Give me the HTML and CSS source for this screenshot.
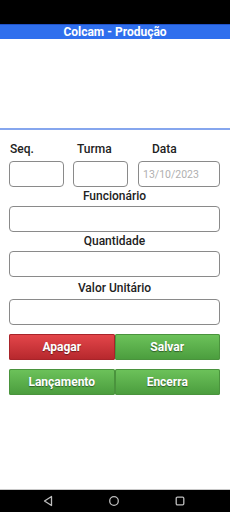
FILE: index.html
```html
<!DOCTYPE html>
<html>
<head>
    <title>Colcam - Produção</title>
    <link rel="stylesheet" href="styles.css">
</head>
<body>
    <div class="screen">
        <div class="status-bar"></div>
        <div class="title-bar">Colcam - Produção</div>
        <div class="banner"></div>

        <form class="prod-form">
            <div class="top-row">
                <label class="lbl lbl-seq">Seq.</label>
                <label class="lbl lbl-turma">Turma</label>
                <label class="lbl lbl-data">Data</label>
                <input type="text" class="field">
                <input type="text" class="field">
                <input type="text" class="field" placeholder="13/10/2023">
            </div>

            <label class="lbl lbl-center">Funcionário</label>
            <input type="text" class="field">
            <label class="lbl lbl-center">Quantidade</label>
            <input type="text" class="field">
            <label class="lbl lbl-center lbl-valor">Valor Unitário</label>
            <input type="text" class="field">

            <div class="btn-row first">
                <button type="button" class="btn btn-red">Apagar</button>
                <button type="button" class="btn btn-green">Salvar</button>
            </div>
            <div class="btn-row">
                <button type="button" class="btn btn-green">Lançamento</button>
                <button type="button" class="btn btn-green">Encerra</button>
            </div>
        </form>

        <div class="nav-bar">
            <svg width="12" height="12" viewBox="0 0 12 12"><path d="M9.5 1.5 L2.5 6 L9.5 10.5 Z" fill="none" stroke="#bdbdbd" stroke-width="1.3" stroke-linejoin="round"/></svg>
            <svg width="12" height="12" viewBox="0 0 12 12"><circle cx="6" cy="6" r="4.3" fill="none" stroke="#bdbdbd" stroke-width="1.3"/></svg>
            <svg width="12" height="12" viewBox="0 0 12 12"><rect x="2.2" y="2.2" width="7.6" height="7.6" rx="1.2" fill="none" stroke="#bdbdbd" stroke-width="1.3"/></svg>
        </div>
    </div>
</body>
</html>
```

FILE: styles.css
```css
body {
    margin: 0;
    font-family: Roboto, "Liberation Sans", sans-serif;
    background-color: #fff;
    color: #222;
}
.screen {
    width: 230px;
    height: 512px;
    display: flex;
    flex-direction: column;
    overflow: hidden;
}
.status-bar {
    height: 24px;
    background-color: #000;
}
.title-bar {
    height: 14px;
    line-height: 14px;
    border-top: 1px solid #1f52c9;
    background-color: #2f6fed;
    color: #fff;
    font-size: 12px;
    font-weight: bold;
    text-align: center;
}
.banner {
    height: 89px;
    border-bottom: 2px solid #86a6ee;
}

.prod-form {
    display: flex;
    flex-direction: column;
    padding: 11px 10px 0 9px;
}
.top-row {
    display: grid;
    grid-template-columns: 55px 55px 82px;
    column-gap: 9px;
    row-gap: 4px;
}
.top-row .field:nth-of-type(3) {
    margin-left: 1px;
}
.lbl {
    font-size: 12px;
    font-weight: 500;
    line-height: 16px;
    color: #222;
}
.lbl-seq {
    padding-left: 1px;
}
.lbl-turma {
    padding-left: 4px;
}
.lbl-data {
    padding-left: 15px;
}
.lbl-center {
    display: block;
    text-align: center;
    padding: 1px 0 2px;
}
.lbl-valor {
    padding-top: 3px;
    padding-bottom: 3px;
}
.field {
    height: 26px;
    box-sizing: border-box;
    border: 1px solid #8a8a8a;
    border-radius: 4px;
    padding: 0 4px;
    font-family: Roboto, "Liberation Sans", sans-serif;
    font-size: 10.5px;
    background: #fff;
    width: 100%;
}
.field::placeholder {
    color: #b0b0b0;
}

.btn-row {
    display: flex;
    margin-top: 9px;
}
.btn {
    flex: 1;
    height: 26px;
    border: none;
    border-radius: 2px;
    color: #fff;
    font-family: Roboto, "Liberation Sans", sans-serif;
    font-size: 12px;
    font-weight: bold;
    text-shadow: 0 1px 1px rgba(0, 0, 0, 0.45);
    padding: 0;
}
.btn-red {
    background: linear-gradient(#e5474b, #b5272c);
    box-shadow: inset 0 0 0 1px #a8242a;
}
.btn-green {
    background: linear-gradient(#6dc35b, #4a9c3d);
    box-shadow: inset 0 0 0 1px #4a933d;
}

.nav-bar {
    margin-top: auto;
    height: 22px;
    border-top: 1px solid #c8c8c8;
    background-color: #000;
    display: flex;
    align-items: center;
    justify-content: space-between;
    padding: 0 44px 0 42px;
}
```
